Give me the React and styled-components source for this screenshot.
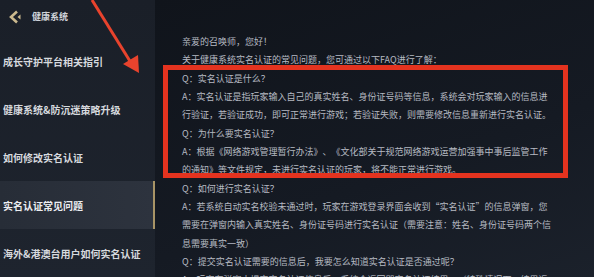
import React from "react";
import styled, { createGlobalStyle } from "styled-components";

const GlobalStyle = createGlobalStyle`
  html, body {
    margin: 0;
    padding: 0;
    background: #131820;
  }
  body {
    font-family: "Noto Sans CJK SC", "Noto Sans", sans-serif;
  }
`;

const menu = [
  "成长守护平台相关指引",
  "健康系统&防沉迷策略升级",
  "如何修改实名认证",
  "实名认证常见问题",
  "海外&港澳台用户如何实名认证",
];

// visual lines of the FAQ text, as they wrap in the panel
const lines = [
  "亲爱的召唤师，您好！",
  "关于健康系统实名认证的常见问题，您可通过以下FAQ进行了解：",
  "Q：实名认证是什么？",
  "A：实名认证是指玩家输入自己的真实姓名、身份证号码等信息，系统会对玩家输入的信息进",
  "行验证，若验证成功，即可正常进行游戏；若验证失败，则需要修改信息重新进行实名认证。",
  "Q：为什么要实名认证？",
  "A：根据《网络游戏管理暂行办法》、《文化部关于规范网络游戏运营加强事中事后监管工作",
  "的通知》等文件规定，未进行实名认证的玩家，将不能正常进行游戏。",
  "Q：如何进行实名认证？",
  "A：若系统自动实名校验未通过时，玩家在游戏登录界面会收到“实名认证”的信息弹窗，您",
  "需要在弹窗内输入真实姓名、身份证号码进行实名认证（需要注意：姓名、身份证号码两个信",
  "息需要真实一致）",
  "Q：提交实名认证需要的信息后，我要怎么知道实名认证是否通过呢？",
  "A：玩家在弹窗中提交实名认证信息后，系统会返回即实名认证结果。（特殊情况下，结果返",
];

const App = () => {
  return (
    <Page>
      <GlobalStyle />
      <Sidebar>
        <Header>
          <BackIcon width="14" height="14" viewBox="0 0 14 14">
            <polyline points="9,1.5 3,7 9,12.5" fill="none" stroke="#cbb98e" strokeWidth="2.6" />
            <polygon points="12.5,4.5 9.5,7 12.5,9.5" fill="#cbb98e" />
          </BackIcon>
          <Title>健康系统</Title>
        </Header>
        {menu.map((item, i) => (
          <MenuItem key={item} active={i === 3}>
            {item}
          </MenuItem>
        ))}
      </Sidebar>
      <Content>
        {lines.map((line, i) => (
          <Line key={i}>{line}</Line>
        ))}
        <HighlightBox />
      </Content>
      <Arrow width="60" height="80" viewBox="0 0 60 80">
        <line x1="2" y1="0" x2="43" y2="66" stroke="#e8432d" strokeWidth="3" />
        <polygon points="33,64 48,55 49,73" fill="#e8432d" />
      </Arrow>
    </Page>
  );
};

const Page = styled.div`
  position: relative;
  display: flex;
  width: 594px;
  height: 277px;
  overflow: hidden;
  background: #131820;
`;

const Sidebar = styled.div`
  width: 155px;
  flex-shrink: 0;
  display: flex;
  flex-direction: column;
  background: linear-gradient(180deg, #1a1f28 0%, #1e242e 100%);
`;

const Header = styled.div`
  height: 38px;
  display: flex;
  align-items: center;
  gap: 10px;
  padding: 0 0 4px 8px;
  box-sizing: border-box;
`;

const BackIcon = styled.svg`
  display: block;
`;

const Title = styled.span`
  font-size: 9px;
  font-weight: 700;
  color: #cfd2d8;
`;

const MenuItem = styled.div`
  height: 48px;
  flex-shrink: 0;
  display: flex;
  align-items: center;
  padding-left: 3px;
  box-sizing: border-box;
  font-size: 10px;
  font-weight: 700;
  color: ${(p) => (p.active ? "#eceef2" : "#d6d9de")};
  background: ${(p) => (p.active ? "linear-gradient(90deg, #272d37 0%, #2d333e 100%)" : "transparent")};
  border-right: 2px solid ${(p) => (p.active ? "#a89466" : "transparent")};
  white-space: nowrap;
`;

const Content = styled.div`
  position: relative;
  flex: 1;
  padding: 33px 0 0 27px;
  background:
    radial-gradient(ellipse 330px 180px at 640px 330px, #2a3240 0%, #232a36 60%, transparent 61%),
    linear-gradient(160deg, #10141b 0%, #151a23 60%, #1b212b 100%);
`;

const Line = styled.p`
  margin: 0;
  font-size: 9px;
  line-height: 18.35px;
  color: #b6bac2;
  white-space: nowrap;
  text-spacing-trim: space-all;
`;

const HighlightBox = styled.div`
  position: absolute;
  left: 8px;
  top: 65px;
  width: 405px;
  height: 113px;
  box-sizing: border-box;
  border: 5px solid #e4331f;
`;

const Arrow = styled.svg`
  position: absolute;
  left: 90px;
  top: 0;
`;

export default App;
